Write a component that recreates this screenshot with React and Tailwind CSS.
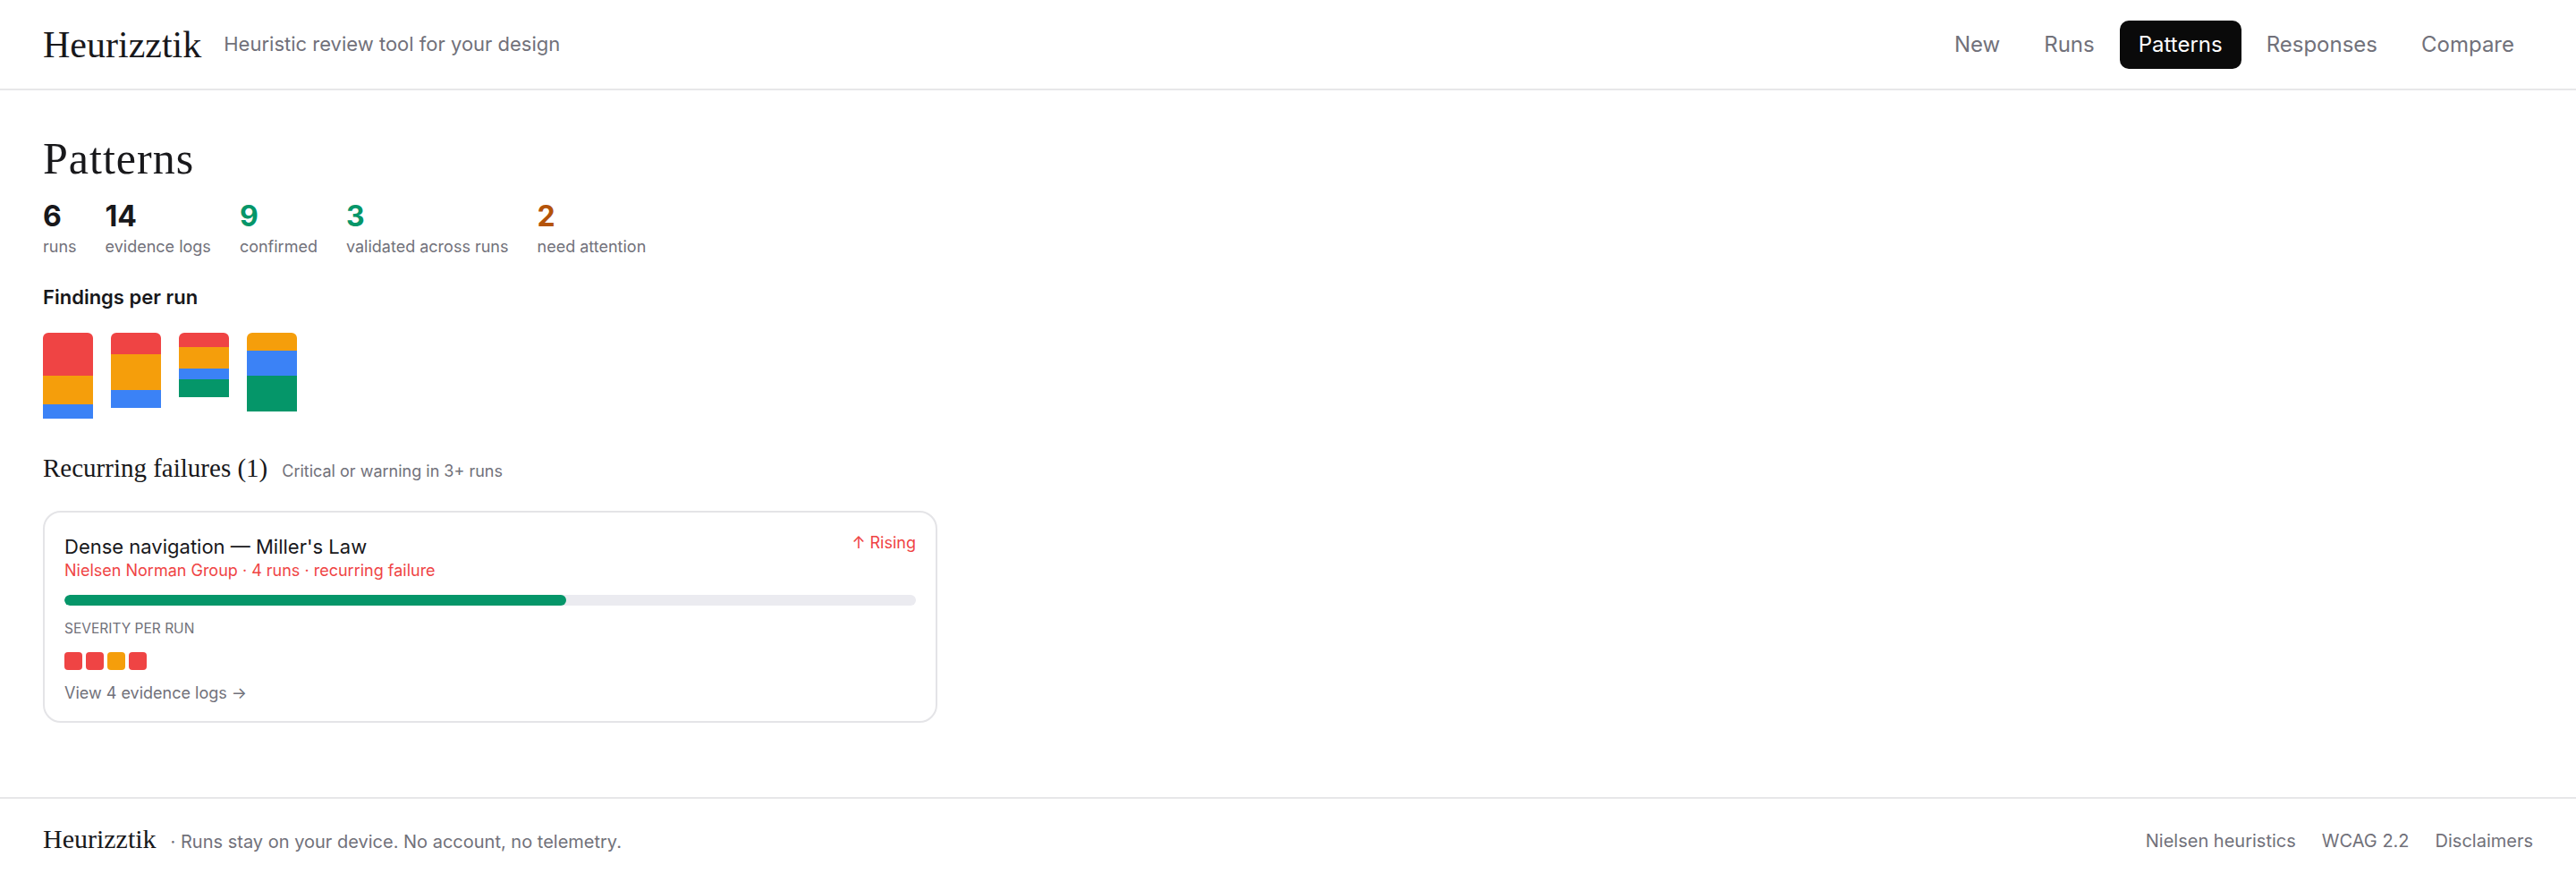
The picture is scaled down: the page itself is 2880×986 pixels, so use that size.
import React from 'react';

const serif = "font-['Liberation_Serif',serif]";

const navItems = ['New', 'Runs', 'Patterns', 'Responses', 'Compare'];

const stats = [
  { value: '6', label: 'runs', color: 'text-[#18181b]' },
  { value: '14', label: 'evidence logs', color: 'text-[#18181b]' },
  { value: '9', label: 'confirmed', color: 'text-[#059669]' },
  { value: '3', label: 'validated across runs', color: 'text-[#059669]' },
  { value: '2', label: 'need attention', color: 'text-[#b45309]' },
];

// stacked segments per run, heights in px: [critical, warning, info, pass]
const runs = [
  [48, 32, 16, 0],
  [24, 40, 20, 0],
  [16, 24, 12, 20],
  [0, 20, 28, 40],
];

const segColors = ['bg-[#ef4444]', 'bg-[#f59e0b]', 'bg-[#3b82f6]', 'bg-[#059669]'];

const severity = ['bg-[#ef4444]', 'bg-[#ef4444]', 'bg-[#f59e0b]', 'bg-[#ef4444]'];

function Header() {
  return (
    <header className="h-[101px] border-b-2 border-[#e7e7e9] px-12 flex items-center justify-between">
      <div className="flex items-center gap-[25px]">
        <span className={`${serif} text-[42px] leading-none text-[#18181b]`}>Heurizztik</span>
        <span className="text-[22px] text-[#71717a]">Heuristic review tool for your design</span>
      </div>
      <nav className="flex items-center gap-[7px]">
        {navItems.map(item => (
          <a
            key={item}
            className={`h-[54px] px-[21px] flex items-center rounded-[10px] text-[24px] ${
              item === 'Patterns' ? 'bg-[#0a0a0a] text-white' : 'text-[#71717a]'
            }`}
          >
            {item}
          </a>
        ))}
      </nav>
    </header>
  );
}

function RunBars() {
  return (
    <div className="flex items-start gap-5">
      {runs.map((segs, i) => (
        <div key={i} className="w-14 flex flex-col rounded-t-md overflow-hidden">
          {segs.map((h, j) =>
            h > 0 ? <div key={j} className={segColors[j]} style={{ height: h }} /> : null
          )}
        </div>
      ))}
    </div>
  );
}

function FailureCard() {
  return (
    <div className="w-[1000px] border-2 border-[#e4e4e7] rounded-[20px] px-[22px] pt-[24px] pb-[19px]">
      <div className="flex items-start justify-between">
        <div>
          <div className="text-[22px] leading-7 text-[#18181b]">Dense navigation — Miller's Law</div>
          <div className="text-[18px] leading-6 text-[#ef4444] mt-[1px]">
            Nielsen Norman Group · 4 runs · recurring failure
          </div>
        </div>
        <span className="text-[18px] leading-6 text-[#ef4444] mt-[-2px]">↑ Rising</span>
      </div>
      <div className="mt-[15px] h-3 rounded-full bg-[#ebebf0] overflow-hidden">
        <div className="h-full bg-[#059669] rounded-full" style={{ width: '58.9%' }} />
      </div>
      <div className="mt-4 text-[15.5px] leading-5 uppercase text-[#71717a]">Severity per run</div>
      <div className="mt-[16px] flex gap-1">
        {severity.map((c, i) => (
          <span key={i} className={`w-5 h-5 rounded ${c}`} />
        ))}
      </div>
      <a className="mt-[14px] block text-[18px] leading-6 text-[#71717a]">View 4 evidence logs →</a>
    </div>
  );
}

function Footer() {
  return (
    <footer className="h-[95px] border-t-2 border-[#e7e7e9] px-12 flex items-center justify-between">
      <div className="flex items-baseline gap-4">
        <span className={`${serif} text-[30px] leading-none text-[#18181b]`}>Heurizztik</span>
        <span className="text-[20px] text-[#71717a]">· Runs stay on your device. No account, no telemetry.</span>
      </div>
      <div className="flex items-center gap-[29px] text-[20px] text-[#71717a]">
        <a>Nielsen heuristics</a>
        <a>WCAG 2.2</a>
        <a>Disclaimers</a>
      </div>
    </footer>
  );
}

export default function App() {
  return (
    <div className="min-h-screen flex flex-col bg-white font-['Inter',sans-serif] text-[#18181b]">
      <Header />
      <main className="flex-1 px-12 pt-[51px]">
        <h1 className={`${serif} text-[50px] leading-none tracking-[1px] font-normal`}>Patterns</h1>
        <div className="mt-6 flex gap-8">
          {stats.map(s => (
            <div key={s.label}>
              <div className={`text-[32px] leading-8 font-bold ${s.color}`}>{s.value}</div>
              <div className="mt-[6px] text-[18px] leading-6 text-[#71717a]">{s.label}</div>
            </div>
          ))}
        </div>
        <h2 className="mt-[30px] text-[22px] leading-7 font-semibold">Findings per run</h2>
        <div className="mt-[26px]">
          <RunBars />
        </div>
        <div className="mt-[37px] flex items-baseline gap-4">
          <h2 className={`${serif} text-[29px] leading-9 font-normal`}>Recurring failures (1)</h2>
          <span className="text-[18px] text-[#71717a]">Critical or warning in 3+ runs</span>
        </div>
        <div className="mt-[30px]">
          <FailureCard />
        </div>
      </main>
      <Footer />
    </div>
  );
}
